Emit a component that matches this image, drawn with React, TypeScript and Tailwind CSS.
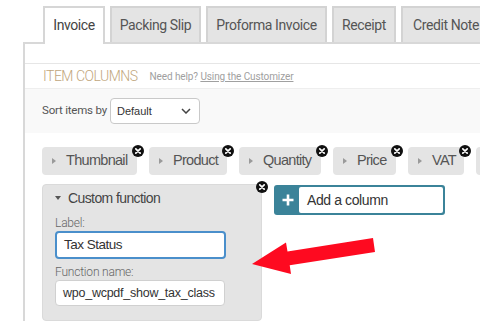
import React from 'react';

const tabs = [
  { label: 'Invoice', w: 'w-[62px]', active: true },
  { label: 'Packing Slip', w: 'w-[91px]' },
  { label: 'Proforma Invoice', w: 'w-[121px]' },
  { label: 'Receipt', w: 'w-[64px]' },
  { label: 'Credit Note', w: 'w-[90px]' },
];

const chips = [
  { label: 'Thumbnail', w: 'w-[95px]' },
  { label: 'Product', w: 'w-[78px]' },
  { label: 'Quantity', w: 'w-[82px]' },
  { label: 'Price', w: 'w-[63px]' },
  { label: 'VAT', w: 'w-[56px]' },
];

function CloseIcon({ className }: { className: string }) {
  return (
    <svg viewBox="0 0 12 12" className={`absolute h-[12px] w-[12px] ${className}`}>
      <circle cx="6" cy="6" r="6" fill="#111" />
      <path d="M3.8 3.8 L8.2 8.2 M8.2 3.8 L3.8 8.2" stroke="#fff" strokeWidth="1.7" strokeLinecap="round" />
    </svg>
  );
}

function Chip({ label, w }: { label: string; w: string }) {
  return (
    <div className={`relative flex h-[28px] shrink-0 items-center rounded-[4px] bg-[#e4e4e4] pl-[10px] ${w}`}>
      <svg viewBox="0 0 4 6" className="h-[6px] w-[4px]">
        <path d="M0 0 L4 3 L0 6 Z" fill="#9a9a9a" />
      </svg>
      <span className="ml-[10px] text-[14.5px] tracking-[-0.7px] text-[#555]">{label}</span>
      <CloseIcon className="-right-[7px] -top-[2px]" />
    </div>
  );
}

export default function App() {
  return (
    <div className="relative h-[333px] w-[480px] overflow-hidden bg-white font-['Liberation_Sans',Arial,sans-serif]">
      {/* tabs */}
      <div className="relative z-10 flex items-start gap-[5px] pl-[43px] pt-[6px] font-['Roboto',sans-serif]">
        {tabs.map((t) =>
          t.active ? (
            <div
              key={t.label}
              className={`-mb-[2px] flex h-[38px] shrink-0 items-center justify-center border-2 border-b-0 border-[#d6d6d6] bg-white pb-[2px] text-[14px] tracking-[-0.4px] text-[#444] ${t.w}`}
            >
              {t.label}
            </div>
          ) : (
            <div
              key={t.label}
              className={`flex h-[36px] shrink-0 items-center justify-center border-2 border-b-0 border-[#d3d3d3] bg-[#e4e4e4] text-[14px] tracking-[-0.4px] text-[#555] ${t.w}`}
            >
              {t.label}
            </div>
          )
        )}
      </div>

      {/* panel */}
      <div className="ml-[23px] w-[600px] border-l-2 border-t-2 border-[#d8d8d8]">
        <div className="h-[20px] border-b border-[#e6e6e6]" />
        <div className="flex h-[25px] items-center gap-[12px] border-b border-[#eeeeee] pl-[18px] font-['Roboto',sans-serif]">
          <span className="text-[14px] font-light tracking-[-0.5px] text-[#bfa67c]">ITEM COLUMNS</span>
          <span className="text-[10px] tracking-[-0.1px] text-[#a0a0a0]">
            Need help? <span className="underline">Using the Customizer</span>
          </span>
        </div>

        <div className="flex h-[44px] items-center bg-[#f9f9f9] pl-[17px]">
          <span className="font-['Roboto',sans-serif] text-[11.5px] tracking-[-0.2px] text-[#555]">Sort items by</span>
          <div className="ml-[3px] flex h-[26px] w-[90px] items-center justify-between rounded-[4px] border border-[#c9c9c9] bg-white pl-[6px] pr-[8px]">
            <span className="text-[11px] font-medium text-[#333]">Default</span>
            <svg viewBox="0 0 10 6" className="h-[6px] w-[10px]">
              <path d="M1 1 L5 5 L9 1" fill="none" stroke="#444" strokeWidth="1.5" />
            </svg>
          </div>
        </div>

        <div className="pl-[17px] pt-[14px]">
          <div className="flex gap-[12px]">
            {chips.map((c) => (
              <Chip key={c.label} label={c.label} w={c.w} />
            ))}
            <div className="h-[28px] w-[70px] shrink-0 rounded-[4px] bg-[#e4e4e4]" />
          </div>

          <div className="mt-[9px] flex items-start gap-[12px]">
            <div className="relative h-[137px] w-[220px] rounded-[4px] border border-[#dadada] bg-[#e4e4e4] px-[12px] pt-[3px]">
              <div className="flex h-[20px] items-center">
                <svg viewBox="0 0 6 4" className="h-[4px] w-[6px]">
                  <path d="M0 0 L6 0 L3 4 Z" fill="#555" />
                </svg>
                <span className="ml-[7px] text-[14px] tracking-[-0.6px] text-[#444]">Custom function</span>
              </div>
              <div className="mt-[7px] h-[16px] font-['Roboto',sans-serif] text-[12px] font-light leading-[16px] tracking-[-0.2px] text-[#666]">
                Label:
              </div>
              <div className="flex h-[28px] w-[171px] items-center rounded-[4px] border-2 border-[#4a8fcb] bg-white pl-[7px] text-[13.5px] tracking-[-0.5px] text-[#333]">
                Tax Status
              </div>
              <div className="mt-[5px] h-[16px] font-['Roboto',sans-serif] text-[12px] font-light leading-[16px] tracking-[-0.2px] text-[#666]">
                Function name:
              </div>
              <div className="flex h-[26px] w-[170px] items-center rounded-[4px] border border-[#d0d0d0] bg-white pl-[7px] text-[12.5px] tracking-[-0.25px] text-[#333]">
                wpo_wcpdf_show_tax_class
              </div>
              <CloseIcon className="-right-[7px] -top-[4px]" />
            </div>

            <div className="mt-[1px] flex h-[30px] w-[171px] rounded-[3px] bg-[#3b8399] p-[2px]">
              <div className="flex w-[23px] items-center justify-center">
                <svg viewBox="0 0 12 12" className="h-[12px] w-[12px]">
                  <path d="M6 0.5 V11.5 M0.5 6 H11.5" stroke="#fff" strokeWidth="2.6" />
                </svg>
              </div>
              <div className="flex flex-1 items-center rounded-[2px] bg-white pl-[8px] text-[14px] tracking-[-0.4px] text-[#333]">
                Add a column
              </div>
            </div>
          </div>
        </div>
      </div>

      {/* red arrow overlay */}
      <svg className="pointer-events-none absolute left-0 top-0 h-[333px] w-[480px]" viewBox="0 0 480 333">
        <polygon
          points="373,238 287.5,251.4 286,242.5 252,264 291,274 289.7,265.2 375,252"
          fill="#fe0a20"
        />
      </svg>
    </div>
  );
}
